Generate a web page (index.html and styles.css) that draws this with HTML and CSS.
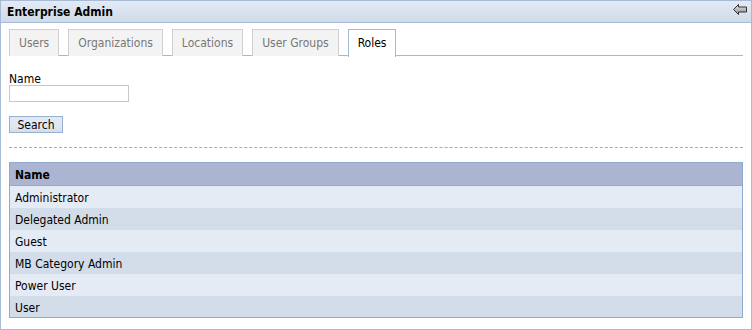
FILE: index.html
```html
<!DOCTYPE html>
<html lang="en">
<head>
  <meta charset="UTF-8">
  <title>Enterprise Admin</title>
  <link rel="stylesheet" href="styles.css">
</head>
<body>

  <div class="portlet">
    <!-- Title Bar -->
    <div class="portlet-title">
      <span>Enterprise Admin</span>
      <svg class="back-icon" width="14" height="11" viewBox="0 0 14 11">
        <defs>
          <linearGradient id="arrowGrad" x1="0" y1="0" x2="0" y2="1">
            <stop offset="0" stop-color="#e8e8e8"/>
            <stop offset="1" stop-color="#8a8a8a"/>
          </linearGradient>
        </defs>
        <path d="M0.5 5.5 L5.5 0.5 L5.5 3 L13.5 3 L13.5 8 L5.5 8 L5.5 10.5 Z" fill="url(#arrowGrad)" stroke="#333" stroke-width="1"/>
      </svg>
    </div>

    <div class="portlet-body">
      <!-- Tabs -->
      <ul class="tabs">
        <li>Users</li>
        <li>Organizations</li>
        <li>Locations</li>
        <li>User Groups</li>
        <li class="current">Roles</li>
      </ul>

      <!-- Search Form -->
      <div class="search-form">
        <label>Name</label>
        <input type="text">
        <button class="search-btn">Search</button>
      </div>

      <div class="separator"></div>

      <!-- Results Table -->
      <table class="results">
        <tr class="header-row"><th>Name</th></tr>
        <tr><td>Administrator</td></tr>
        <tr class="alt"><td>Delegated Admin</td></tr>
        <tr><td>Guest</td></tr>
        <tr class="alt"><td>MB Category Admin</td></tr>
        <tr><td>Power User</td></tr>
        <tr class="alt"><td>User</td></tr>
      </table>
    </div>
  </div>

</body>
</html>
```

FILE: styles.css
```css
* {
  margin: 0;
  padding: 0;
  box-sizing: border-box;
}

body {
  font-family: 'DejaVu Sans Condensed', 'DejaVu Sans', sans-serif;
  font-size: 11px;
  color: #000;
  background: #fff;
}

.portlet {
  width: 752px;
  height: 330px;
  border: 1px solid #a8bbd6;
}

/* Title Bar */
.portlet-title {
  height: 22px;
  background: linear-gradient(#e3eaf4, #cfdbea);
  border-bottom: 1px solid #a8bbd6;
  display: flex;
  justify-content: space-between;
  align-items: center;
  padding: 0 4px 0 6px;
  font-weight: bold;
  font-size: 12px;
}

.back-icon {
  margin-bottom: 4px;
}

.portlet-body {
  padding: 6px 8px 0 8px;
}

/* Tabs */
.tabs {
  list-style: none;
  display: flex;
  gap: 9px;
  border-bottom: 1px solid #a3b8d6;
  height: 27px;
}

.tabs li {
  height: 27px;
  padding: 0 9px;
  line-height: 26px;
  font-size: 12px;
  color: #777;
  background: #f3f3f3;
  border: 1px solid #cfcfcf;
  border-bottom: none;
}

.tabs li.current {
  color: #000;
  background: #fff;
  border: 1px solid #a3b8d6;
  border-bottom: none;
  height: 28px;
}

/* Search Form */
.search-form {
  display: flex;
  flex-direction: column;
  align-items: flex-start;
  padding-top: 17px;
}

.search-form label {
  font-size: 12px;
  line-height: 12px;
}

.search-form input {
  width: 120px;
  height: 17px;
  border: 1px solid #c8c8c8;
  margin-bottom: 14px;
}

.search-btn {
  font-family: inherit;
  font-size: 12px;
  height: 17px;
  width: 54px;
  line-height: 14px;
  background: linear-gradient(#e1e8f1 60%, #d2dde9);
  border: 1px solid #98b0d2;
  color: #000;
}

.separator {
  border-top: 1px dashed #9cadc4;
  margin: 14px 0 14px 0;
}

/* Results Table */
.results {
  width: 100%;
  border-collapse: collapse;
  border: 1px solid #8fa9cf;
}

.results th,
.results td {
  text-align: left;
  padding: 3px 5px 0 5px;
  height: 22px;
  font-size: 12px;
}

.results th {
  background: #abb5d1;
  border-bottom: 1px solid #8fa9cf;
  height: 23px;
  padding-top: 1px;
}

.results td {
  background: #e4ebf4;
}

.results tr.alt td {
  background: #d2dde9;
}
```
